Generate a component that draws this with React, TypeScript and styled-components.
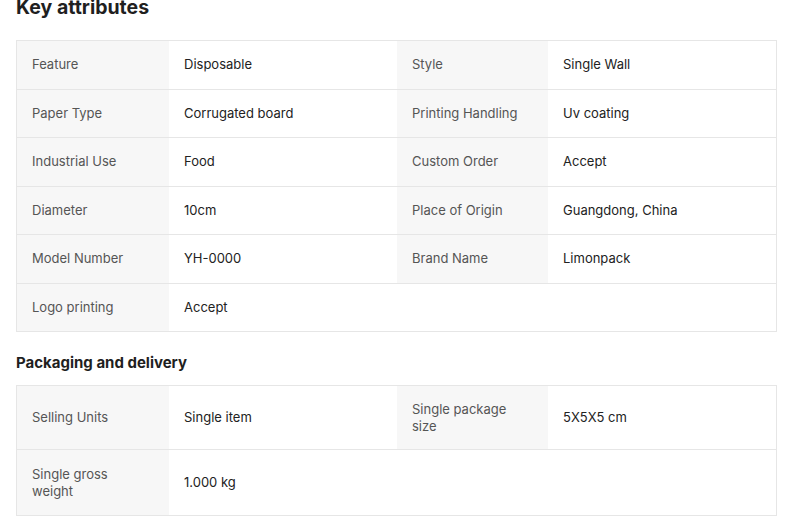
import React from 'react';
import styled, { createGlobalStyle } from 'styled-components';

const GlobalStyle = createGlobalStyle`
  html, body {
    margin: 0;
    padding: 0;
    background: #fff;
  }
  body {
    font-family: Inter, "Noto Sans", "Liberation Sans", sans-serif;
    color: #222;
    -webkit-font-smoothing: antialiased;
  }
`;

const Page = styled.div`
  display: flex;
  flex-direction: column;
  padding: 0 13px 0 16px;
  margin-top: -5px;
`;

const Title = styled.h2`
  font-size: 19.5px;
  font-weight: 700;
  line-height: 24px;
  color: #1f1f1f;
  margin: 0 0 21px;
`;

const SubTitle = styled.h3`
  font-size: 15px;
  font-weight: 700;
  line-height: 20px;
  color: #1f1f1f;
  margin: 21px 0 12px;
`;

const Table = styled.div`
  display: flex;
  flex-direction: column;
  border: 1px solid #e6e6e6;
`;

const Row = styled.div<{ $height: number }>`
  display: grid;
  grid-template-columns: 152px 228px 151px 1fr;
  min-height: ${({ $height }) => $height}px;
  border-top: 1px solid #e6e6e6;

  &:first-child {
    border-top: none;
  }
`;

const Cell = styled.div<{ $label?: boolean }>`
  display: flex;
  align-items: center;
  padding: 8px 24px 8px 15px;
  font-size: 13px;
  line-height: 17px;
  background: ${({ $label }) => ($label ? '#f7f7f7' : '#fff')};
  color: ${({ $label }) => ($label ? '#555' : '#222')};
`;

type Pair = [string, string];

const keyAttributes: Pair[][] = [
  [['Feature', 'Disposable'], ['Style', 'Single Wall']],
  [['Paper Type', 'Corrugated board'], ['Printing Handling', 'Uv coating']],
  [['Industrial Use', 'Food'], ['Custom Order', 'Accept']],
  [['Diameter', '10cm'], ['Place of Origin', 'Guangdong, China']],
  [['Model Number', 'YH-0000'], ['Brand Name', 'Limonpack']],
  [['Logo printing', 'Accept']],
];

const packaging: Pair[][] = [
  [['Selling Units', 'Single item'], ['Single package size', '5X5X5 cm']],
  [['Single gross weight', '1.000 kg']],
];

const AttrTable = ({ rows, heights }: { rows: Pair[][]; heights: number[] }) => (
  <Table>
    {rows.map((row, i) => (
      <Row key={i} $height={heights[i % heights.length]}>
        {row.map(([label, value]) => (
          <React.Fragment key={label}>
            <Cell $label>{label}</Cell>
            <Cell>{value}</Cell>
          </React.Fragment>
        ))}
      </Row>
    ))}
  </Table>
);

export default function App() {
  return (
    <>
      <GlobalStyle />
      <Page>
        <Title>Key attributes</Title>
        <AttrTable rows={keyAttributes} heights={[47.5]} />
        <SubTitle>Packaging and delivery</SubTitle>
        <AttrTable rows={packaging} heights={[63, 65]} />
      </Page>
    </>
  );
}
